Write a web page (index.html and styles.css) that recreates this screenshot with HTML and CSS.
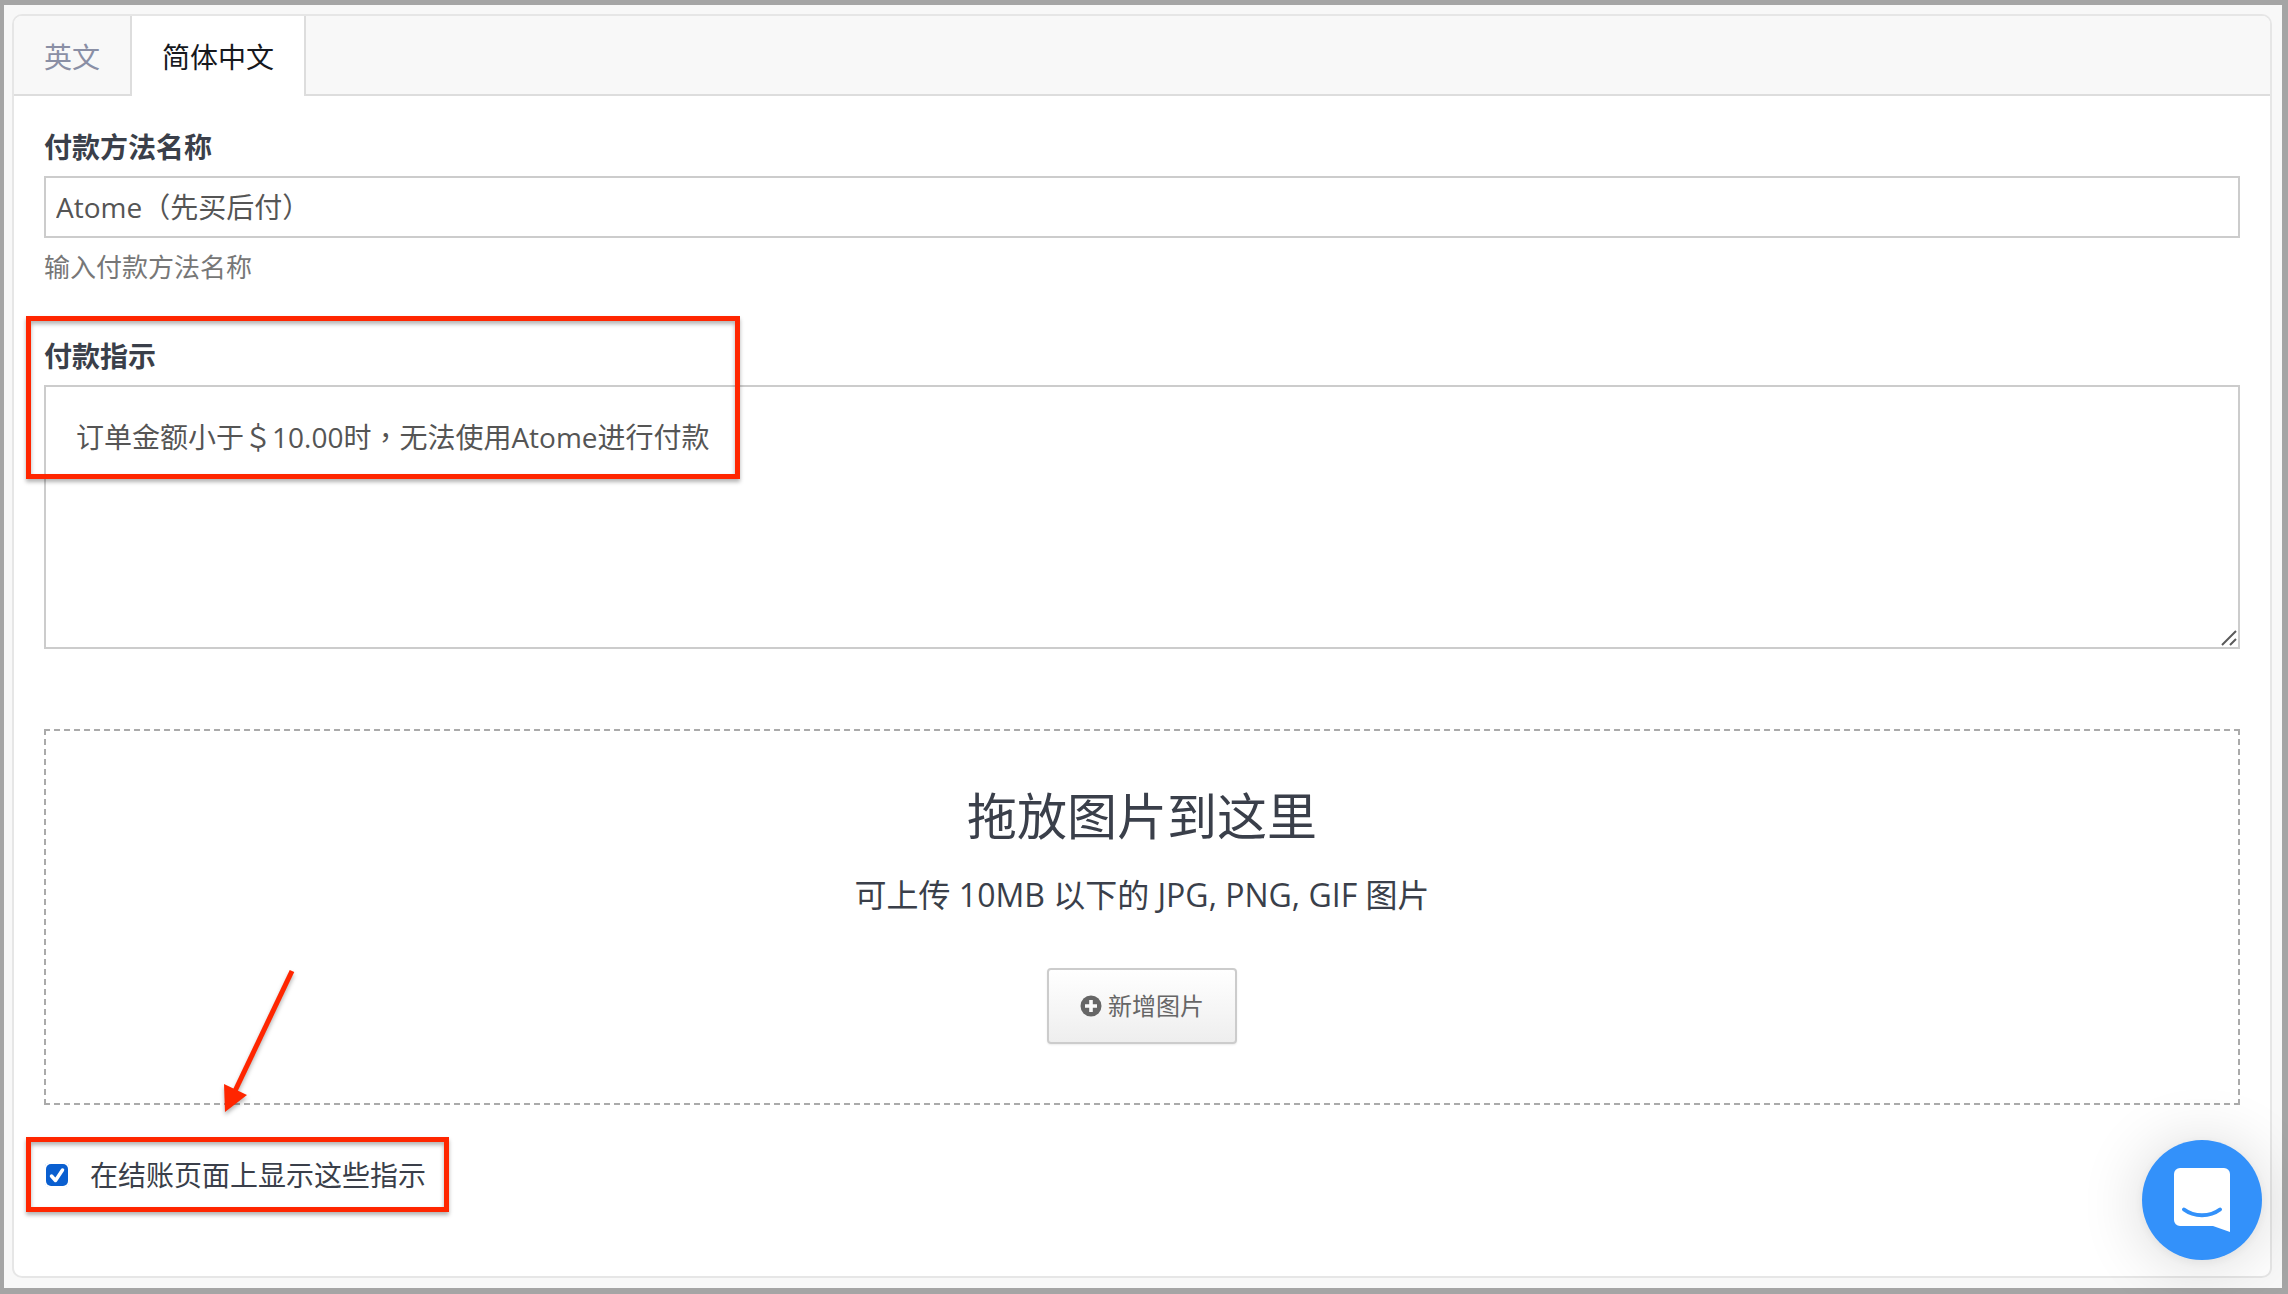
FILE: index.html
```html
<!DOCTYPE html>
<html lang="zh-CN">
<head>
    <meta charset="UTF-8" />
    <meta name="viewport" content="width=device-width, initial-scale=1.0" />
    <title>付款方法</title>
    <link rel="stylesheet" href="styles.css">
</head>
<body>
    <div class="panel">
        <nav class="tabs">
            <a href="#en" class="tab">英文</a>
            <a href="#zh" class="tab active">简体中文</a>
        </nav>

        <form class="panel-body">
            <div class="form-group">
                <label for="name">付款方法名称</label>
                <input type="text" id="name" class="form-control" value="Atome（先买后付）" />
                <p class="help">输入付款方法名称</p>
            </div>

            <div class="form-group instructions">
                <label for="instructions">付款指示</label>
                <div class="textarea-wrap">
                    <textarea id="instructions" class="form-control" lang="zh-TW">订单金额小于＄10.00时，无法使用Atome进行付款</textarea>
                    <svg class="grip" viewBox="0 0 16 16">
                        <path d="M1 15L15 1M9 15L15 9" fill="none" stroke="#5a5a5a" stroke-width="2" />
                    </svg>
                </div>
                <div class="callout callout-text"></div>
            </div>

            <div class="dropzone">
                <h2>拖放图片到这里</h2>
                <p>可上传 10MB 以下的 JPG, PNG, GIF 图片</p>
                <button type="button" class="btn">
                    <svg viewBox="0 0 22 22">
                        <circle cx="11" cy="11" r="10.5" fill="#666" />
                        <path d="M11 5v12M5 11h12" stroke="#fafafa" stroke-width="3.6" />
                    </svg>
                    新增图片
                </button>
            </div>

            <div class="check-row">
                <input type="checkbox" id="show" checked />
                <label for="show">在结账页面上显示这些指示</label>
                <div class="callout callout-check"></div>
                <svg class="arrow" viewBox="0 0 80 150">
                    <path d="M70 3L13 123" stroke="#ff2600" stroke-width="5" />
                    <path d="M2 116L25 127L3 144z" fill="#ff2600" />
                </svg>
            </div>
        </form>
    </div>

    <button type="button" class="chat" aria-label="Chat">
        <svg viewBox="0 0 56 64">
            <path d="M6 0h44a6 6 0 0 1 6 6v58l-17-6H6a6 6 0 0 1-6-6V6a6 6 0 0 1 6-6z" fill="#fff" />
            <path d="M10 41.500C20 49 36 49 46 41.500" fill="none" stroke="#3391fa" stroke-width="4" stroke-linecap="round" />
        </svg>
    </button>
</body>
</html>
```
FILE: styles.css
```css
* {
    margin: 0;
    padding: 0;
    box-sizing: border-box;
}
body {
    display: flex;
    min-height: 100vh;
    padding: 9px 10px 10px 8px;
    border: solid #a5a5a5;
    border-width: 5px 6px 6px 4px;
    background: #f8f8f8;
    color: #3a3f4a;
    font-family: "Open Sans", "Noto Sans CJK SC", sans-serif;
    font-size: 28px;
    line-height: 40px;
}
.panel {
    flex: 1;
    border: 2px solid #e6e6e6;
    border-radius: 10px;
    background: #fff;
}

/* tabs */
.tabs {
    display: flex;
    height: 80px;
    border-bottom: 2px solid #ddd;
    border-radius: 8px 8px 0 0;
    background: #f8f8f8;
}
.tab {
    height: 78px;
    padding: 21px 30px 0;
    border-right: 2px solid #ddd;
    color: #8a8fa5;
    text-decoration: none;
}
.tab.active {
    height: 80px;
    background: #fff;
    color: #16181d;
}

/* form */
.panel-body {
    padding: 31px 30px;
}
.form-group {
    position: relative;
}
.form-group label {
    display: block;
    margin-bottom: 9px;
    font-weight: 700;
}
.form-control {
    display: block;
    width: 100%;
    border: 2px solid #ccc;
    background: #fff;
    color: #555;
    font: inherit;
    outline: none;
}
input.form-control {
    height: 62px;
    padding: 0 10px 2px;
}
textarea.form-control {
    height: 264px;
    padding: 30px;
    font-family: "Open Sans", "Noto Sans CJK TC", sans-serif;
    resize: none;
}
.textarea-wrap {
    position: relative;
}
.grip {
    position: absolute;
    right: 3px;
    bottom: 3px;
    width: 16px;
    height: 16px;
}
.help {
    margin-top: 9px;
    color: #777;
    font-size: 26px;
}
.instructions {
    margin-top: 49px;
}

/* image upload */
.dropzone {
    display: flex;
    flex-direction: column;
    align-items: center;
    margin-top: 80px;
    padding: 50px 30px 59px;
    border: 2px dashed #aaa;
}
.dropzone h2 {
    font-size: 50px;
    font-weight: 400;
    line-height: 70px;
}
.dropzone p {
    margin: 21px 0 50px;
    font-size: 32px;
    line-height: 46px;
}
.btn {
    display: flex;
    align-items: center;
    gap: 6px;
    height: 76px;
    padding: 0 31px;
    border: 2px solid #ccc;
    border-radius: 4px;
    background: linear-gradient(#fff, #eee);
    box-shadow: 0 1px 2px rgba(0, 0, 0, 0.08);
    color: #666;
    font: inherit;
    font-size: 24px;
    cursor: pointer;
}
.btn svg {
    width: 22px;
    height: 22px;
}

.check-row {
    position: relative;
    display: flex;
    align-items: center;
    gap: 20px;
    margin-top: 50px;
}
.check-row input {
    width: 26px;
    height: 26px;
    border-radius: 8px;
    appearance: none;
}
.check-row input:checked {
    background: url("data:image/svg+xml,%3Csvg xmlns='http://www.w3.org/2000/svg' viewBox='0 0 26 26'%3E%3Crect x='2' y='2' width='22' height='22' rx='5' fill='%230a5fd0'/%3E%3Cpath d='M.5 4Q1 1 4 .5M22 .5Q25 1 25.500 4M25.500 22Q25 25 22 25.500M4 25.500Q1 25 .5 22' fill='none' stroke='%234a88dc'/%3E%3Cpath d='M7.500 14L11.500 18.500L18.500 8' fill='none' stroke='%23fff' stroke-width='3.500' stroke-linecap='round' stroke-linejoin='round'/%3E%3C/svg%3E") center / 26px 26px no-repeat;
}

/* annotations */
.callout {
    position: absolute;
    border: 5px solid #ff2600;
    box-shadow: 0 3px 4px rgba(0, 0, 0, 0.3), inset 0 3px 4px rgba(0, 0, 0, 0.3);
    pointer-events: none;
}
.callout-text {
    top: -20px;
    left: -18px;
    width: 714px;
    height: 163px;
}
.callout-check {
    top: -18px;
    left: -18px;
    width: 423px;
    height: 75px;
}
.arrow {
    position: absolute;
    bottom: 77px;
    left: 178px;
    width: 80px;
    height: 150px;
    filter: drop-shadow(0 3px 2px rgba(0, 0, 0, 0.3));
    pointer-events: none;
}

/* chat launcher */
.chat {
    position: fixed;
    right: 26px;
    bottom: 34px;
    display: flex;
    align-items: center;
    justify-content: center;
    width: 120px;
    height: 120px;
    border: 0;
    border-radius: 50%;
    background: #3391fa;
    box-shadow: 0 2px 12px rgba(0, 0, 0, 0.06), 0 4px 64px rgba(0, 0, 0, 0.16);
    cursor: pointer;
}
.chat svg {
    width: 56px;
    height: 64px;
}
```
